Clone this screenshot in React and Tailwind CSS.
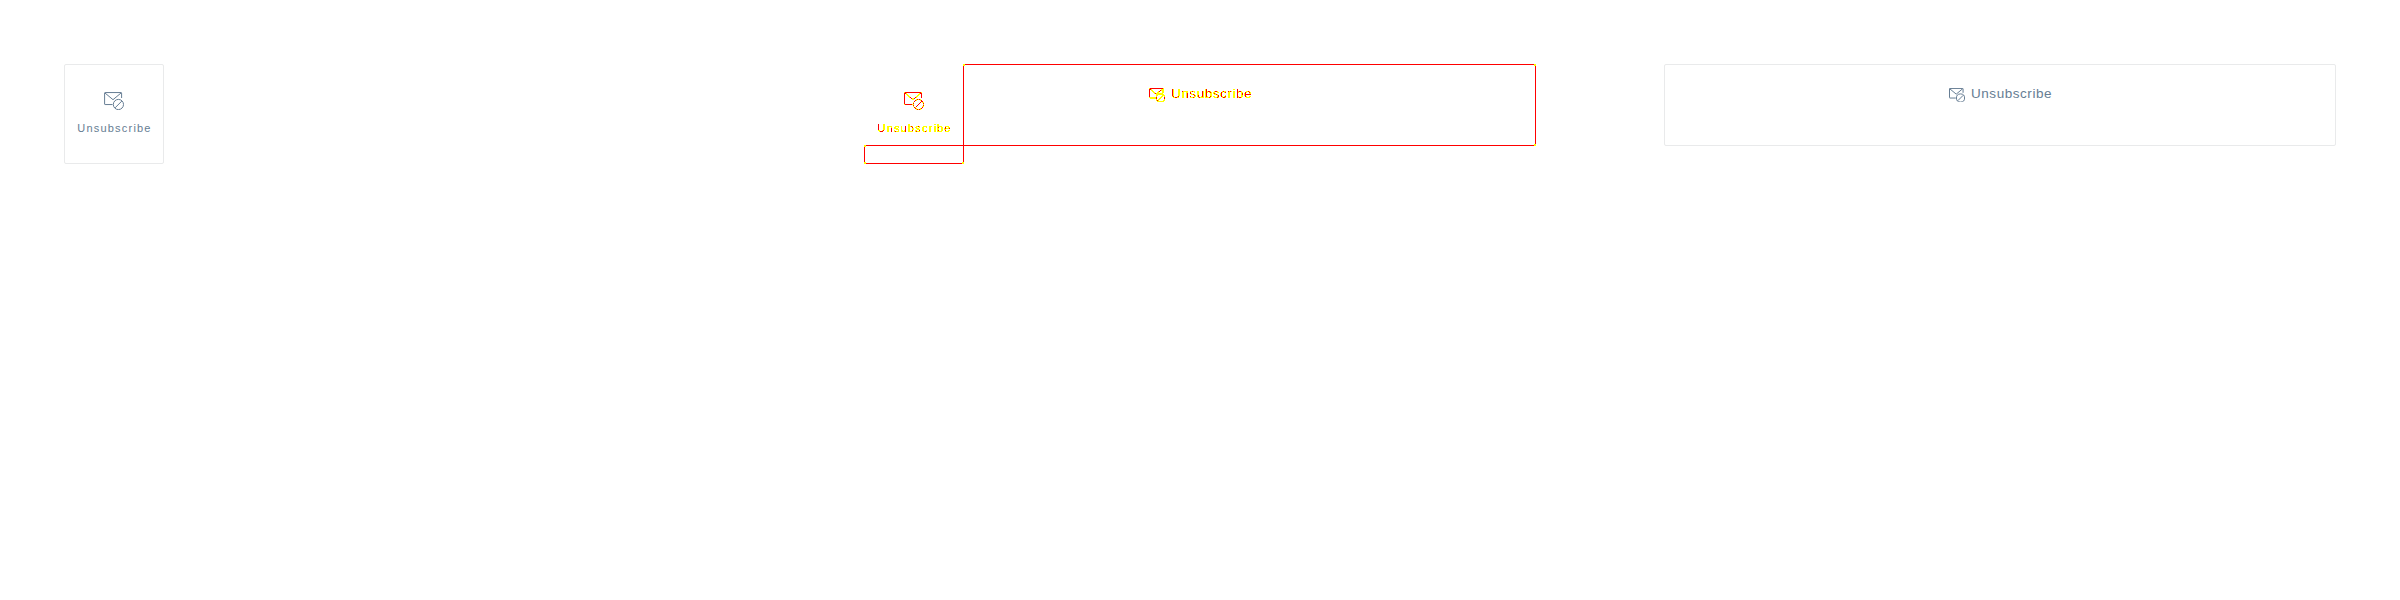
function MailIcon({ className }) {
  return (
    <svg viewBox="0 0 20 18" fill="none" stroke="currentColor" strokeWidth="1" className={className}>
      <path vectorEffect="non-scaling-stroke" d="M8.5 12.55h-7.4a.5.5 0 0 1-.5-.5v-11a.5.5 0 0 1 .5-.5h16a.5.5 0 0 1 .5.5V6" />
      <path vectorEffect="non-scaling-stroke" d="M1 1l8 6.7L17 1" />
      <circle vectorEffect="non-scaling-stroke" cx="14.4" cy="12.5" r="5.1" />
      <path vectorEffect="non-scaling-stroke" d="M11 15.9l6.8-6.8" />
    </svg>
  );
}

function Tile() {
  return (
    <div className="flex flex-col items-center pt-7">
      <MailIcon className="h-[18px] w-5 shrink-0" />
      <span className="mt-[10px] pl-px text-[11px] leading-4 tracking-[1.2px]">Unsubscribe</span>
    </div>
  );
}

function Row() {
  return (
    <div className="flex items-start gap-1.5 pt-[22px]">
      <MailIcon className="mt-[2px] h-[14.4px] w-4 shrink-0" />
      <span className="text-[13.5px] leading-4 tracking-[0.55px]">Unsubscribe</span>
    </div>
  );
}

function Corner({ className }) {
  return <i className={"absolute size-0.5 bg-[#ffff00] " + className} />;
}

export default function App() {
  return (
    <div className="grid h-[600px] w-[2400px] grid-cols-3 bg-white font-['Liberation_Sans',sans-serif] text-[#667d93]">
      <svg className="absolute size-0">
        <filter id="diff" colorInterpolationFilters="sRGB">
          <feColorMatrix values="0 0 0 0 1  0 0 0 1 0  0 0 0 0 0  0 0 0 1 0" />
          <feComponentTransfer>
            <feFuncG type="discrete" tableValues="1 1 1 1 0" />
            <feFuncA type="discrete" tableValues="0 1 1 1 1" />
          </feComponentTransfer>
        </filter>
      </svg>
      <section className="p-16">
        <div className="size-[100px] rounded-[2px] border border-[#e9eaeb]">
          <div className="-mt-px">
            <Tile />
          </div>
        </div>
      </section>
      <section className="p-16">
        <div className="grid grid-cols-[99px_573px] grid-rows-[81px_19px]">
          <div className="w-[100px] text-black [filter:url(#diff)]">
            <Tile />
          </div>
          <div className="relative h-[82px] border border-[#ff0000] pl-[185px]">
            <div className="-mt-px text-black [filter:url(#diff)]">
              <Row />
            </div>
            <Corner className="-left-px -top-px" />
            <Corner className="-right-px -top-px" />
            <Corner className="-bottom-px -right-px" />
          </div>
          <div className="relative w-[100px] border border-[#ff0000]">
            <Corner className="-left-px -top-px" />
            <Corner className="-bottom-px -left-px" />
            <Corner className="-bottom-px -right-px" />
          </div>
        </div>
      </section>
      <section className="p-16">
        <div className="h-[82px] rounded-[2px] border border-[#e9eaeb] pl-[284px]">
          <div className="-mt-px">
            <Row />
          </div>
        </div>
      </section>
    </div>
  );
}
